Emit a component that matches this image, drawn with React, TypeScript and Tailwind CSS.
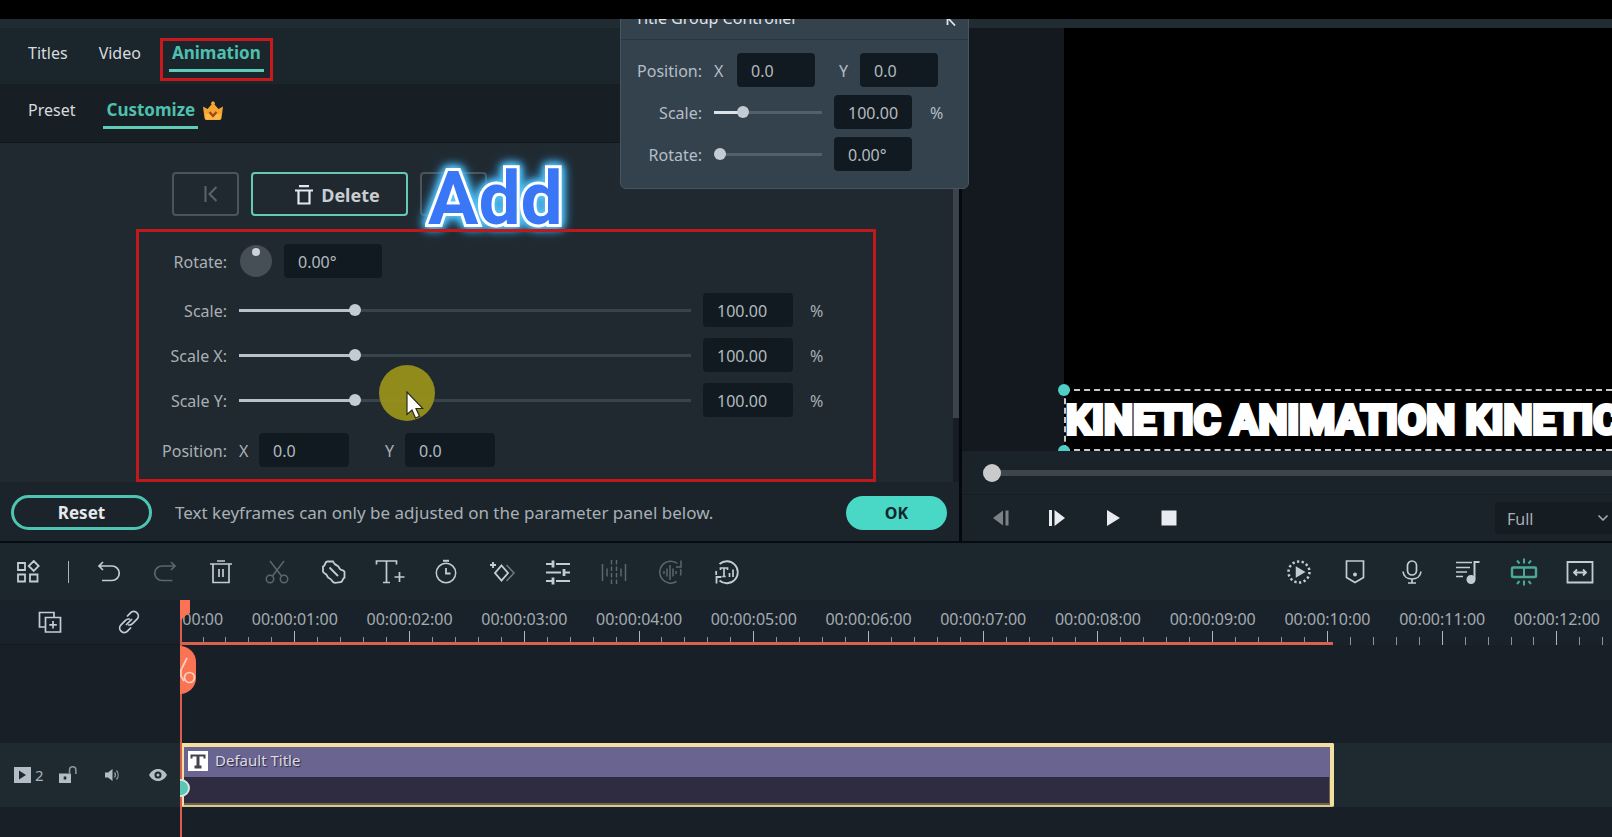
import React from 'react';
import type { ReactNode } from 'react';

const SECONDS_VISIBLE = 12.48;
// the strip of ruler cells starts 4% early, so it is 104% of the ruler's width
const CELL_WIDTH = 100 / SECONDS_VISIBLE / 1.04;

const scaleRows = [
  { id: 'scale', label: 'Scale:', value: '100.00', gap: 'mt-[15px]' },
  { id: 'scale-x', label: 'Scale X:', value: '100.00', gap: 'mt-[11px]' },
  { id: 'scale-y', label: 'Scale Y:', value: '100.00', gap: 'mt-[11px]' },
];

type IconProps = { children: ReactNode; className?: string };

function Icon({ children, className = 'size-6' }: IconProps) {
  return (
    <svg
      viewBox="0 0 24 24"
      fill="none"
      stroke="currentColor"
      strokeWidth="1.5"
      className={`${className} shrink-0`}
      aria-hidden="true"
    >
      {children}
    </svg>
  );
}

const leftTools = [
  {
    name: 'Undo',
    dim: false,
    icon: <path d="M5 2 1 6l4 4M1.500 6h12.500a7.200 7.200 0 0 1 0 14.500H4" strokeWidth="1.700" />,
  },
  {
    name: 'Redo',
    dim: true,
    icon: <path d="m17 2 4 4-4 4M20.500 6H8a7.200 7.200 0 0 0 0 14.500h10.500" strokeWidth="1.700" />,
  },
  {
    name: 'Delete clip',
    dim: false,
    icon: <path d="M0 4h22M7 1h8M3 4v18.500h16V4M9 9v8M13 9v8" strokeWidth="1.700" />,
  },
  {
    name: 'Split',
    dim: true,
    icon: (
      <>
        <path d="M4 1 15.500 16M18 1 6.500 16" />
        <circle cx="4" cy="19" r="3.700" />
        <circle cx="18" cy="19" r="3.700" />
      </>
    ),
  },
  {
    name: 'Mark',
    dim: false,
    icon: (
      <>
        <path
          strokeWidth="1.800"
          d="M5.500 1.500h5.500c.8 2.300 2.500 3.500 4.500 4.300 1.500.8 1.600 2.700 3 3.700 1.300.8 3 .9 4 2.200v6c-1.800.5-1.500 2.800-3 4-1.300 1-3.500.3-5 1-1.800.3-3.500-.2-4.300-1.700-.7-1.500-2-2.200-3.400-3C5.300 17.200 5.300 15.300 4 14.300c-1-.9-2.500-1.200-3-2.500V6.500c1.800-.5 1.800-2 2.500-3.500.4-.9 1-1.500 2-1.500Z"
        />
        <path strokeWidth="1.800" d="m7.500 7.500 8.500 8.500" />
      </>
    ),
  },
  {
    name: 'Add text',
    dim: false,
    icon: <path d="M-1.500 4.500V1h20v3.500M8.500 1v21.500M5 22.500h7M21.500 12v10M16.500 17h10" strokeWidth="1.700" />,
  },
  {
    name: 'Duration',
    dim: false,
    icon: (
      <>
        <circle cx="12" cy="13" r="9.700" />
        <path d="M9 .8h6" strokeWidth="2" />
        <path d="M12 8v5.500h4.500" strokeWidth="1.800" />
      </>
    ),
  },
  {
    name: 'Keyframe',
    dim: false,
    icon: (
      <>
        <path strokeWidth="1.900" d="m11.500 5.500 6.500 7.500-6.500 7.500L5 13l6.500-7.500Z" />
        <path d="m16.500 5 7.500 8-7.500 8" opacity=".5" />
        <path strokeWidth="1.900" d="M3 2v6M0 5h6" />
      </>
    ),
  },
  {
    name: 'Adjust',
    dim: false,
    icon: (
      <>
        <path d="M0 4h7M10 4h14M0 12.500h15M19 12.500h5M0 21h7M10 21h14" strokeWidth="1.800" />
        <path strokeWidth="2.800" d="M7 .5v7M18 9v7M7 17.500v7" />
      </>
    ),
  },
  {
    name: 'Beat detection',
    dim: true,
    icon: (
      <>
        <path d="M.5 4v17M5 8.500v8M19 8.500v8M23.500 4v17" />
        <path d="M9.500 0v24M14.500 0v24" strokeDasharray="4.500 2" />
      </>
    ),
  },
  {
    name: 'Speech to text',
    dim: true,
    icon: (
      <>
        <path d="M19.500 3.500A11 11 0 1 0 18.500 21.500M23 .5v6.500h-5M22.500 9a11 11 0 0 1 0 6.500" />
        <path d="M6 11v3M9 8.500v8M12 5v15M15 8.500v8M18 11v3" />
      </>
    ),
  },
  {
    name: 'Text to speech',
    dim: false,
    icon: (
      <>
        <path d="M5.500 4A11 11 0 1 1 5.500 20.500M2.500 23.500v-6.500h5M2.300 15a11 11 0 0 1 0-4" strokeWidth="1.800" />
        <path d="M6.500 10V8h7v2M10 8v8.500M8.300 16.500h3.400M15.500 13v4M19 9.500V17" strokeWidth="1.700" />
      </>
    ),
  },
];

const rightTools = [
  {
    name: 'Render preview',
    green: false,
    icon: (
      <>
        <circle cx="11" cy="12" r="10.500" strokeWidth="2.500" strokeDasharray="2.300 2.413" />
        <path d="M8.500 7.500v9l7.500-4.500-7.500-4.500Z" fill="currentColor" />
      </>
    ),
  },
  {
    name: 'Marker',
    green: false,
    icon: (
      <>
        <path d="M2.500 1h17v16.500L11 22.500l-8.500-5V1Z" strokeWidth="1.700" />
        <circle cx="11" cy="14.500" r="1.200" fill="currentColor" />
      </>
    ),
  },
  {
    name: 'Record voiceover',
    green: false,
    icon: (
      <>
        <rect x="7.500" y="1" width="9" height="14" rx="4.500" strokeWidth="1.700" />
        <path d="M3 11.500c.5 5 4.500 7.500 9 7.500s8.500-2.500 9-7.500M12 19v4M8 23h8" strokeWidth="1.700" />
      </>
    ),
  },
  {
    name: 'Audio mixer',
    green: false,
    icon: (
      <>
        <path d="M0 2.500h16M0 7.500h14M0 12h11M0 16.500h7" strokeWidth="1.700" />
        <path d="M23.500 2h-5v17" strokeWidth="2" />
        <circle cx="15" cy="19.500" r="3.800" fill="currentColor" />
      </>
    ),
  },
  {
    name: 'Magnetic timeline',
    green: true,
    icon: (
      <>
        <rect x="0" y="7.500" width="24" height="9.500" rx="1" strokeWidth="2.400" />
        <path
          d="M12 7.500v9.500M12-1.500v5M5 .5l2.500 3M19 .5l-2.500 3M12 20.500v5M5 24l2.500-3M19 24l-2.500-3"
          strokeWidth="2"
        />
      </>
    ),
  },
  {
    name: 'Zoom to fit',
    green: false,
    icon: <path d="M-.5 2h25v20.500h-25ZM6 12.500h12M9 9.500l-3 3 3 3M15 9.500l3 3-3 3" strokeWidth="1.800" />,
  },
];

function Slider({ id, value, fill, rail }: { id: string; value: number; fill: string; rail: string }) {
  return (
    <input
      id={id}
      type="range"
      min={0}
      max={100}
      defaultValue={value}
      className="h-3 w-full min-w-0 flex-1 cursor-pointer appearance-none bg-transparent bg-[length:100%_3px] bg-center bg-no-repeat [&::-webkit-slider-thumb]:size-3 [&::-webkit-slider-thumb]:appearance-none [&::-webkit-slider-thumb]:rounded-full [&::-webkit-slider-thumb]:bg-[#c3ccd2]"
      style={{ backgroundImage: `linear-gradient(to right, ${fill} ${value}%, ${rail} ${value}%)` }}
    />
  );
}

function Field({ id, label, value, className }: { id: string; label: string; value: string; className: string }) {
  return (
    <input
      id={id}
      type="text"
      aria-label={label}
      defaultValue={value}
      className={`h-[34px] rounded bg-[#111a21] pt-0.5 pl-3.5 text-base text-[#b3babf] outline-none ${className}`}
    />
  );
}

function TitleGroupController() {
  return (
    <div className="absolute -top-5 left-[620px] z-20 h-[190px] w-[349px] rounded-md border border-[#465560] bg-[#34424d] text-[#b4bec6]">
      <div className="flex h-10 items-start justify-between border-b border-[#293640] pt-1.5 pr-3 pl-3.5">
        <h2 className="text-base leading-6 text-[#dfe4e8]">Title Group Controller</h2>
        <button type="button" aria-label="Collapse" className="pt-2.5 text-[#dfe4e8]">
          <svg viewBox="0 0 10 10" className="size-2.5" fill="none" stroke="currentColor" strokeWidth="1.800">
            <path d="M1.500 9V1.500H8M1.500 1.500 9 9.500" />
          </svg>
        </button>
      </div>
      <div className="flex flex-col gap-2 pt-[13px]">
        <div className="flex items-center">
          <span className="w-[81px] pt-0.5 text-right">Position:</span>
          <label htmlFor="group-x" className="ml-3 w-[23px] pt-0.5">
            X
          </label>
          <Field id="group-x" label="Group position X" value="0.0" className="w-[78px]" />
          <label htmlFor="group-y" className="ml-6 w-[21px] pt-0.5">
            Y
          </label>
          <Field id="group-y" label="Group position Y" value="0.0" className="w-[78px]" />
        </div>
        <div className="flex items-center">
          <label htmlFor="group-scale" className="w-[81px] pt-0.5 text-right">
            Scale:
          </label>
          <div className="ml-3 flex w-[108px]">
            <Slider id="group-scale" value={24} fill="#dbe1e5" rail="#53606a" />
          </div>
          <Field id="group-scale-value" label="Group scale" value="100.00" className="ml-3 w-[78px]" />
          <span className="ml-[18px] pt-0.5">%</span>
        </div>
        <div className="flex items-center">
          <label htmlFor="group-rotate" className="w-[81px] pt-0.5 text-right">
            Rotate:
          </label>
          <div className="ml-3 flex w-[108px]">
            <Slider id="group-rotate" value={0} fill="#dbe1e5" rail="#53606a" />
          </div>
          <Field id="group-rotate-value" label="Group rotation" value="0.00°" className="ml-3 w-[78px]" />
        </div>
      </div>
    </div>
  );
}

function PropertyTabs() {
  return (
    <>
      <nav className="flex h-14 items-start bg-[#1b252c] pt-[13px] pl-7 text-base leading-6 text-[#d7dbde]">
        <button type="button">Titles</button>
        <button type="button" className="ml-[31px]">
          Video
        </button>
        <button
          type="button"
          className="relative ml-7 border-b-[3px] border-[#5fcbb9] px-[3px] pb-1 text-[17px] font-bold text-[#4fc0ae]"
        >
          Animation
          <span className="pointer-events-none absolute -inset-x-[9px] -top-[3px] -bottom-3 border-[3px] border-[#c8191c]" />
        </button>
      </nav>
      <nav className="flex h-[59px] items-start border-b border-[#11181d] bg-[#171f25] pt-3.5 pl-7 text-base leading-6 text-[#d7dbde]">
        <button type="button">Preset</button>
        <button
          type="button"
          className="ml-7 border-b-[3px] border-[#5fcbb9] px-[3px] pb-1 text-[17px] font-bold text-[#4fc0ae]"
        >
          Customize
        </button>
        <svg viewBox="0 0 20 20" className="mt-[3px] ml-[5px] size-5" aria-hidden="true">
          <path
            d="M0 5.500 4.500 8 8.500 3.500a1.900 1.900 0 1 1 3 0L15.500 8 20 5.500 18.500 17c-.2 1.500-1 2-2.500 2H4c-1.500 0-2.300-.5-2.500-2L0 5.500Z"
            fill="#f5a531"
          />
          <path d="M2 13h16l-.5 4c-.2 1.200-.8 1.500-2 1.500h-11c-1.200 0-1.800-.3-2-1.500L2 13Z" fill="#ffb84a" />
          <path d="m6.500 11 3.500 4 3.500-4" fill="none" stroke="#9a4a12" strokeWidth="2.200" />
        </svg>
      </nav>
    </>
  );
}

function KeyframeButtons() {
  return (
    <div className="relative flex h-11 pl-[172px]">
      <button
        type="button"
        aria-label="Previous keyframe"
        className="flex w-[67px] items-center justify-center rounded border-2 border-[#4b545a] pl-2.5 text-[#5b646a]"
      >
        <svg viewBox="0 0 14 16" className="h-4 w-3.5" fill="none" stroke="currentColor" strokeWidth="2">
          <path d="M1.500 0v16M12.500 1 5.500 8l7 7" />
        </svg>
      </button>
      <button
        type="button"
        className="ml-3 flex w-[157px] items-center justify-center gap-2 rounded border-2 border-[#66c9b8] pt-0.5 pl-4 text-lg font-bold text-[#c9cdd0]"
      >
        <svg viewBox="0 0 18 20" className="h-5 w-[18px]" fill="none" stroke="#e3e8ee" strokeWidth="2.200">
          <path d="M0 5.500h18M4 1.200h10M3.500 5.500v13h11v-13" />
        </svg>
        Delete
      </button>
      <button
        type="button"
        aria-label="Next keyframe"
        className="ml-3 w-[67px] rounded border-2 border-[#4b545a]"
      />
      <span className="pointer-events-none absolute -top-3.5 left-[428px] font-[Roboto] text-[75px] leading-[80px] font-bold text-[#3a77f7] [-webkit-text-stroke:6px_white] [filter:drop-shadow(0_0_3px_#5cc8f5)_drop-shadow(0_0_4px_#4fb9ee)_drop-shadow(0_0_4px_#2f8fcf)] [paint-order:stroke_fill]">
        Add
      </span>
    </div>
  );
}

function AnimationParameters() {
  return (
    <div className="relative mt-[13px] mr-[77px] ml-[136px] border-[3px] border-[#c0191c] pt-3 pb-3 text-[#a9b0b5]">
      <div className="flex items-center">
        <label htmlFor="rotate-value" className="w-[88px] pt-0.5 text-right">
          Rotate:
        </label>
        <button
          type="button"
          aria-label="Rotation dial"
          className="ml-[13px] flex size-8 justify-center rounded-full bg-[#464f56] pt-[3px]"
        >
          <span className="size-2 rounded-full bg-[#ccd2d8]" />
        </button>
        <Field id="rotate-value" label="Rotate" value="0.00°" className="ml-3 w-[98px]" />
      </div>
      {scaleRows.map((row) => (
        <div key={row.id} className={`flex items-center pr-[47px] ${row.gap}`}>
          <label htmlFor={row.id} className="w-[88px] pt-0.5 text-right">
            {row.label}
          </label>
          <div className="ml-3 flex min-w-0 flex-1">
            <Slider id={row.id} value={25} fill="#b9c2c8" rail="#39434a" />
          </div>
          <Field id={`${row.id}-value`} label={row.label} value={row.value} className="ml-3 w-[90px]" />
          <span className="ml-[17px] w-4 pt-0.5">%</span>
        </div>
      ))}
      <div className="mt-4 flex items-center">
        <span className="w-[88px] pt-0.5 text-right">Position:</span>
        <label htmlFor="position-x" className="ml-3 w-5 pt-0.5">
          X
        </label>
        <Field id="position-x" label="Position X" value="0.0" className="w-[90px]" />
        <label htmlFor="position-y" className="ml-9 w-5 pt-0.5">
          Y
        </label>
        <Field id="position-y" label="Position Y" value="0.0" className="w-[90px]" />
      </div>

      {/* click highlight with the pointer */}
      <div className="pointer-events-none absolute top-[133px] left-60 size-14 rounded-full bg-[#9c961a]/90">
        <svg viewBox="0 0 18 28" className="absolute top-[26px] left-[27px] h-7 w-[18px]" aria-hidden="true">
          <path
            d="M1 1v22.500l5-4.500 3.500 8 4-1.800L10 17.500h6.800L1 1Z"
            fill="#fff"
            stroke="#2a2a20"
            strokeWidth="1.200"
          />
        </svg>
      </div>
    </div>
  );
}

function PropertyPanel() {
  return (
    <section className="flex min-w-0 flex-col border-r-[3px] border-[#05090e]">
      <div className="h-[9px] bg-[#202b32]" />
      <PropertyTabs />
      <div className="flex flex-1 bg-[#202930]">
        <div className="min-w-0 flex-1 pt-[29px]">
          <KeyframeButtons />
          <AnimationParameters />
        </div>
        <div className="w-1.5 bg-[#181d25]">
          <div className="h-[275px] bg-[#3b444c]" />
        </div>
      </div>
      <div className="flex h-[59px] items-center bg-[#1b242b] pt-0.5 pr-3 pl-[11px]">
        <button
          type="button"
          className="h-[35px] w-[141px] rounded-full border-[3px] border-[#4fc4b2] text-[17px] leading-6 font-bold text-[#e6e9eb]"
        >
          Reset
        </button>
        <p className="ml-[23px] flex-1 text-[17px] text-[#a9b0b5]">
          Text keyframes can only be adjusted on the parameter panel below.
        </p>
        <button type="button" className="h-[34px] w-[101px] rounded-full bg-[#49d8c6] text-base font-bold text-[#12262b]">
          OK
        </button>
      </div>
    </section>
  );
}

function PreviewPanel() {
  return (
    <section className="flex min-w-0 flex-col overflow-hidden bg-[#1a232a]">
      <div className="h-[9px] bg-[#202b32]" />
      <div className="flex flex-1 overflow-hidden bg-[#14181f] pl-[102px]">
        <div className="flex min-w-0 flex-1 items-end bg-black">
          <div className="relative h-[62px] w-full border-y-2 border-l-2 border-dashed border-[#c9c9c9]">
            <span className="absolute -top-[7px] -left-2 size-3 rounded-full bg-[#4fcdc6]" />
            <span className="absolute -bottom-2 -left-2 size-3 rounded-full bg-[#4fcdc6]" />
            <p className="font-[Roboto] text-[41px] leading-[58px] font-bold whitespace-nowrap text-white [-webkit-text-stroke:4px_white] [paint-order:stroke_fill] [stroke-linejoin:round]">
              KINETIC ANIMATION KINETIC
            </p>
          </div>
        </div>
      </div>
      <div className="flex h-11 items-center border-b border-[#151d23] pl-[21px]">
        <input
          type="range"
          aria-label="Playback position"
          defaultValue={0}
          className="h-[18px] w-full appearance-none bg-[linear-gradient(#3e454b,#3e454b)] bg-[length:100%_6px] bg-center bg-no-repeat [&::-webkit-slider-thumb]:size-[18px] [&::-webkit-slider-thumb]:appearance-none [&::-webkit-slider-thumb]:rounded-full [&::-webkit-slider-thumb]:bg-[#c9cacc]"
        />
      </div>
      <div className="flex h-[46px] items-center text-[#e8ebf2]">
        <div className="flex flex-1 pl-[11px]">
          <button type="button" aria-label="Previous frame" className="flex w-14 justify-center text-[#7a8288]">
            <svg viewBox="0 0 16 16" className="size-4" fill="currentColor">
              <path d="M10 .5v15L0 8 10 .5ZM12.500.5H15.500v15H12.500Z" />
            </svg>
          </button>
          <button type="button" aria-label="Next frame" className="flex w-14 justify-center">
            <svg viewBox="0 0 16 16" className="size-4" fill="currentColor">
              <path d="M0 0h3v16H0ZM5.500 0 16 8 5.500 16Z" />
            </svg>
          </button>
          <button type="button" aria-label="Play" className="flex w-14 justify-center">
            <svg viewBox="0 0 16 16" className="size-4" fill="currentColor">
              <path d="M2 0 15 8 2 16Z" />
            </svg>
          </button>
          <button type="button" aria-label="Stop" className="flex w-14 justify-center">
            <svg viewBox="0 0 16 16" className="size-4" fill="currentColor">
              <path d="M.5.5h15v15H.5Z" />
            </svg>
          </button>
        </div>
        <div className="relative w-[117px]">
          <select
            aria-label="Playback quality"
            className="h-8 w-full appearance-none rounded-l bg-[#151c22] pt-0.5 pl-3 text-base text-[#a9b0b5]"
          >
            <option>Full</option>
          </select>
          <svg
            viewBox="0 0 10 6"
            className="pointer-events-none absolute top-[13px] right-1 h-1.5 w-2.5"
            fill="none"
            stroke="#a9b0b5"
            strokeWidth="1.500"
          >
            <path d="m.5.5 4.500 4.500L9.500.5" />
          </svg>
        </div>
      </div>
    </section>
  );
}

function TimelineToolbar() {
  return (
    <div className="flex h-[57px] items-center bg-[#1b262d] pr-1 text-[#c3ccd3]">
      <button type="button" aria-label="Templates" className="flex w-14 justify-center">
        <Icon>
          <path d="M2 3h7v7H2ZM2 14.500h7v7H2ZM14 14.500h7.500v7H14ZM17.700 1l5 5-5 5-5-5 5-5Z" strokeWidth="1.800" />
        </Icon>
      </button>
      <div className="ml-3 h-[22px] w-px bg-[#aab3ba]" />
      <div className="ml-[13px] flex">
        {leftTools.map((tool) => (
          <button
            key={tool.name}
            type="button"
            aria-label={tool.name}
            className={`flex w-14 justify-center ${tool.dim ? 'text-[#5a6670]' : ''}`}
          >
            <Icon className="size-6 overflow-visible">{tool.icon}</Icon>
          </button>
        ))}
      </div>
      <div className="ml-auto flex">
        {rightTools.map((tool) => (
          <button
            key={tool.name}
            type="button"
            aria-label={tool.name}
            className={`flex w-14 justify-center ${tool.green ? 'text-[#4ba896]' : ''}`}
          >
            <Icon className="size-6 overflow-visible">{tool.icon}</Icon>
          </button>
        ))}
      </div>
    </div>
  );
}

function Ruler() {
  const cells = Array.from({ length: 13 }, (_, i) => `00:00:${String(i).padStart(2, '0')}:00`);

  return (
    <div className="relative min-w-0 flex-1 overflow-hidden">
      <div className="-ml-[4%] flex h-full">
        {cells.map((time) => (
          <div key={time} className="flex shrink-0 flex-col items-center" style={{ width: `${CELL_WIDTH}%` }}>
            <span className="pt-[7px] text-base leading-6 text-[#a4abb0]">{time}</span>
            <div className="grid h-3.5 w-full grid-cols-5 items-end justify-items-center">
              <span className="h-2 w-px bg-[#8d959a]" />
              <span className="h-2 w-px bg-[#8d959a]" />
              <span className="h-3.5 w-px bg-[#b0b6ba]" />
              <span className="h-2 w-px bg-[#8d959a]" />
              <span className="h-2 w-px bg-[#8d959a]" />
            </div>
          </div>
        ))}
      </div>
      <div className="absolute bottom-0 left-0 h-[3px] w-[80.500%] bg-[#d9614f]" />
    </div>
  );
}

function Timeline() {
  return (
    <section className="relative flex flex-1 flex-col bg-[#181f26]">
      <div className="flex h-[45px] bg-[#19222a]">
        <div className="flex w-[180px] items-center border-b border-[#141a20] text-[#c3ccd3]">
          <button type="button" aria-label="Add track" className="ml-[38px]">
            <Icon>
              <path d="M8 17H1.500V2.500H16V7M7.500 7.500h15v14.500h-15ZM15 11v7.500M11.300 14.800h7.500" strokeWidth="1.700" />
            </Icon>
          </button>
          <button type="button" aria-label="Link clips" className="ml-[55px]">
            <Icon>
              <path
                d="M10 6.500l3.500-3.600a4.300 4.300 0 0 1 6.500 0c1.800 1.800 1.800 4.500 0 6.300l-4.500 4.500a4.300 4.300 0 0 1-4.500 1M14 17.500l-3.500 3.600a4.300 4.300 0 0 1-6.500 0c-1.800-1.800-1.800-4.500 0-6.300l4.500-4.500a4.300 4.300 0 0 1 4.500-1M9 15l6-6"
                strokeWidth="1.700"
              />
            </Icon>
          </button>
        </div>
        <Ruler />
      </div>
      <div className="h-[98px]" />
      <div className="flex h-16 bg-[#1f2930]">
        <div className="flex w-[180px] items-center pl-3.5 text-[#a9b4bc]">
          <svg viewBox="0 0 17 16" className="h-4 w-[17px]" aria-hidden="true">
            <path d="M0 0h17v16H0Z" fill="#b4bdc6" />
            <path d="M5 3.500v9l7-4.500Z" fill="#1f2930" />
          </svg>
          <span className="ml-1 w-2 text-[15px]">2</span>
          <button type="button" aria-label="Lock track" className="ml-4">
            <svg viewBox="0 0 18 18" className="size-[18px]">
              <path d="M0 7.500h12V17H0ZM4.700 10.500v3h2.600v-3Z" fill="#b4bdc6" fillRule="evenodd" />
              <path d="M10.500 7V4a3.200 3.200 0 0 1 6.400 0v4" fill="none" stroke="#8d979e" strokeWidth="1.500" />
            </svg>
          </button>
          <button type="button" aria-label="Mute track" className="ml-7">
            <svg viewBox="0 0 16 14" className="h-3.5 w-4" fill="none" stroke="#8d979e" strokeWidth="1.300">
              <path d="M0 4.500h3L7.500 1v12L3 9.500H0Z" fill="#b4bdc6" stroke="none" />
              <path d="M9.500 4.500a4 4 0 0 1 0 5M11.500 2.500a7 7 0 0 1 0 9" />
            </svg>
          </button>
          <button type="button" aria-label="Hide track" className="ml-7">
            <svg viewBox="0 0 18 12" className="h-3 w-[18px]">
              <path
                d="M9 0c4 0 7 2.500 9 6-2 3.500-5 6-9 6S2 9.500 0 6c2-3.500 5-6 9-6Zm0 2.500a3.500 3.500 0 1 0 0 7 3.500 3.500 0 0 0 0-7Z"
                fill="#b4bdc6"
                fillRule="evenodd"
              />
              <circle cx="9" cy="6" r="1.500" fill="#b4bdc6" />
            </svg>
          </button>
        </div>
        <div className="flex min-w-0 flex-1">
          <div className="relative flex w-[80.600%] flex-col overflow-hidden rounded-xs border-4 border-b-2 border-[#f3dfa2] border-b-[#d9c88f]">
            <div className="flex h-[30px] items-start gap-[7px] bg-[#696490] pt-1 pl-1">
              <svg viewBox="0 0 20 20" className="size-5" aria-hidden="true">
                <path d="M0 0h20v20H0Z" fill="#fff" />
                <path d="M3.500 7.500V4.500h13v3" fill="none" stroke="#43434d" strokeWidth="2" />
                <path d="M10 4.500v11M6.500 16h7" fill="none" stroke="#43434d" strokeWidth="3" />
              </svg>
              <span className="text-[15px] leading-[18px] text-[#dcdbe6] [text-shadow:1px_1px_1px_#2a2740]">
                Default Title
              </span>
            </div>
            <div className="flex-1 border-r border-b-2 border-[#6f6349] bg-[#2f2b41]" />
          </div>
        </div>
      </div>
      <div className="flex-1" />

      {/* playhead */}
      <div className="pointer-events-none absolute inset-y-0 left-[180px] w-4 overflow-hidden">
        <div className="h-full w-0.5 bg-[#d95f4c]" />
        <svg viewBox="0 0 10 20" className="absolute top-0 left-0 h-5 w-2.5" aria-hidden="true">
          <path d="M0 0h10v13L5 16l-4 4H0Z" fill="#fb7355" />
        </svg>
        <div className="absolute top-[46px] left-0 h-12 w-4 rounded-r-2xl bg-[#fb7355]">
          <svg viewBox="0 0 16 48" className="h-12 w-4" fill="none" stroke="#ffd0bd" strokeWidth="1.700">
            <path d="M7 12 1 24v6l3 5" />
            <circle cx="9.500" cy="31.500" r="5" />
          </svg>
        </div>
        <div className="absolute top-[179px] -left-2 size-[18px] rounded-full border-2 border-[#d5e6e2] bg-[#5cc7b4]" />
      </div>
    </section>
  );
}

export default function App() {
  return (
    <main className="flex min-h-screen flex-col bg-[#181f26] font-['Noto_Sans','Open_Sans',sans-serif] text-base leading-6">
      <div className="relative z-30 h-[19px] bg-black" />
      <div className="relative grid grid-cols-[minmax(0,962fr)_minmax(0,650fr)]">
        <PropertyPanel />
        <PreviewPanel />
        <TitleGroupController />
      </div>
      <div className="h-0.5 bg-[#060c13]" />
      <TimelineToolbar />
      <Timeline />
    </main>
  );
}
